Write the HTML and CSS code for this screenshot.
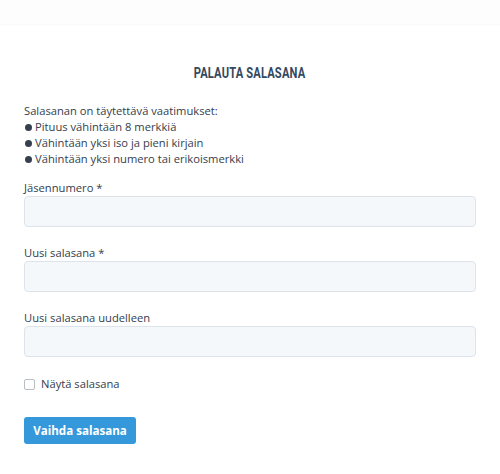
FILE: index.html
```html
<!DOCTYPE html>
<html lang="fi">
<head>
<meta charset="utf-8">
<link rel="stylesheet" href="styles.css">
</head>
<body>
<div class="topband"></div>
<main class="page">
  <h1 class="title"><span class="title-text">PALAUTA SALASANA</span></h1>
  <div class="rules">
    <p>Salasanan on täytettävä vaatimukset:</p>
    <p class="item">Pituus vähintään 8 merkkiä</p>
    <p class="item">Vähintään yksi iso ja pieni kirjain</p>
    <p class="item">Vähintään yksi numero tai erikoismerkki</p>
  </div>
  <form class="form">
    <div class="field">
      <label class="label">Jäsennumero *</label>
      <input class="input" type="text">
    </div>
    <div class="field">
      <label class="label">Uusi salasana *</label>
      <input class="input" type="password">
    </div>
    <div class="field">
      <label class="label">Uusi salasana uudelleen</label>
      <input class="input" type="password">
    </div>
    <label class="check"><span class="box"></span>Näytä salasana</label>
    <button class="btn" type="button">Vaihda salasana</button>
  </form>
</main>
</body>
</html>
```
FILE: styles.css
```css
* { box-sizing: border-box; }
html, body { margin: 0; padding: 0; background: #fff; }
body {
  font-family: "Open Sans", "Noto Sans", sans-serif;
  font-size: 11.2px;
  color: #34404d;
}
.topband {
  height: 25px;
  background: #fdfdfd;
  border-bottom: 1px solid #fafafa;
}
.page {
  padding: 0 24px;
}
.title {
  margin: 40px 0 0;
  text-align: center;
  line-height: 18px;
  height: 18px;
}
.title-text {
  display: inline-block;
  vertical-align: top;
  font-family: "Roboto", sans-serif;
  font-weight: bold;
  font-size: 14.5px;
  line-height: 18px;
  color: #34495e;
  letter-spacing: 0.2px;
  transform: scaleX(0.77);
}
.rules { margin-top: 20px; }
.rules p {
  margin: 0;
  line-height: 16px;
}
.item {
  display: flex;
  align-items: center;
  gap: 3px;
}
.item::before {
  content: "";
  width: 7px;
  height: 7px;
  border-radius: 50%;
  background: #34404d;
  margin-left: 1px;
  margin-top: 1px;
}
.form { margin-top: 13px; display: flex; flex-direction: column; }
.field { display: flex; flex-direction: column; margin-bottom: 18px; }
.label { line-height: 16px; margin-bottom: 0; }
.input {
  height: 31px;
  width: 100%;
  border: 1px solid #dde3ea;
  border-radius: 4px;
  background: #f5f8fb;
  font: inherit;
}
.check {
  display: flex;
  align-items: center;
  gap: 6px;
  line-height: 16px;
  margin-top: 1px;
}
.box {
  width: 11px;
  height: 11px;
  border: 1px solid #b9bec4;
  border-radius: 2px;
  background: #fff;
}
.btn {
  margin-top: 25px;
  align-self: flex-start;
  width: 112px;
  height: 27px;
  border: none;
  border-radius: 3px;
  background: #3498db;
  color: #fff;
  font-family: "Open Sans", sans-serif;
  font-weight: bold;
  font-size: 11.6px;
  padding: 0;
}
```
